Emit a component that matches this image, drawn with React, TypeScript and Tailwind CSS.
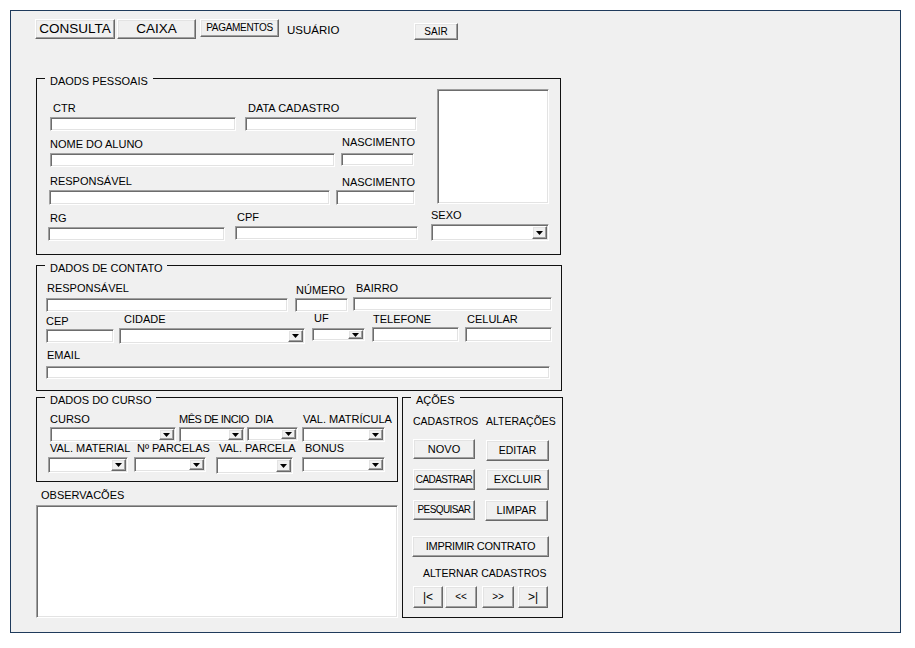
import type { ReactNode } from "react";

// classic win32-ish chrome: sunken edit boxes, raised buttons, black group frames
const sunken =
  "bg-white border border-t-[#a0a0a0] border-l-[#a0a0a0] border-b-white border-r-white shadow-[inset_1px_1px_0_#6d6d6d,inset_-1px_-1px_0_#e3e3e3]";
const raised =
  "bg-[#f0f0f0] border border-t-white border-l-white border-b-[#696969] border-r-[#696969] shadow-[inset_-1px_-1px_0_#a0a0a0,inset_1px_1px_0_#e3e3e3]";

function Box({ className = "" }: { className?: string }) {
  return <div className={`${sunken} ${className}`} />;
}

function Combo({ className = "" }: { className?: string }) {
  return (
    <div className={`${sunken} flex p-[1px] ${className}`}>
      <div className="flex-1" />
      <div className={`${raised} flex w-[15px] items-center justify-center`}>
        <svg width="7" height="4" viewBox="0 0 7 4">
          <path d="M0 0h7L3.5 4z" fill="#000" />
        </svg>
      </div>
    </div>
  );
}

function Btn({ children, className = "" }: { children: ReactNode; className?: string }) {
  return (
    <button
      type="button"
      className={`${raised} flex items-center justify-center whitespace-nowrap leading-none text-black ${className}`}
    >
      {children}
    </button>
  );
}

function Field({
  label,
  className = "",
  labelClass = "",
  boxClass = "",
  combo = false,
}: {
  label: string;
  className?: string;
  labelClass?: string;
  boxClass?: string;
  combo?: boolean;
}) {
  return (
    <div className={`flex shrink-0 flex-col ${className}`}>
      <div className={`h-[13px] whitespace-nowrap text-[11px] leading-[13px] ${labelClass}`}>{label}</div>
      {combo ? <Combo className={boxClass} /> : <Box className={boxClass} />}
    </div>
  );
}

function Group({ title, className = "", children }: { title: string; className?: string; children: ReactNode }) {
  return (
    <fieldset className={`min-w-0 shrink-0 border border-[#111] ${className}`}>
      <legend className="ml-[8px] px-[5px] pt-[6px] text-[11px] leading-[12px]">{title}</legend>
      {children}
    </fieldset>
  );
}

export default function App() {
  return (
    <div className="h-[648px] w-[915px] bg-white p-[10px] font-['Liberation_Sans',Arial,sans-serif] text-black">
      <div className="h-[623px] w-[891px] border border-[#1f3b5c] bg-[#f0f0f0]">
        {/* top menu */}
        <div className="flex items-start pl-[24px] pt-[8px]">
          <Btn className="h-[20px] w-[80px] text-[13.5px]">CONSULTA</Btn>
          <Btn className="ml-[2px] h-[20px] w-[79px] text-[13.5px]">CAIXA</Btn>
          <Btn className="ml-[4px] h-[18px] w-[79px] text-[10px] tracking-[-0.3px]">PAGAMENTOS</Btn>
          <div className="ml-[8px] mt-[4px] w-[127px] text-[11.5px] leading-[14px]">USUÁRIO</div>
          <Btn className="mt-[4px] h-[17px] w-[44px] text-[10px]">SAIR</Btn>
        </div>

        <div className="pl-[25px]">
          <Group title="DAODS PESSOAIS" className="mt-[29px] h-[186px] w-[525px]">
            <div className="flex items-start">
              <div className="w-[380px] shrink-0">
                <div className="mt-[15px] flex items-start">
                  <Field label="CTR" className="ml-[13px] w-[186px]" labelClass="pl-[3px]" boxClass="mt-[2px] h-[14px]" />
                  <Field label="DATA CADASTRO" className="ml-[9px] w-[172px]" labelClass="pl-[3px]" boxClass="mt-[2px] h-[14px]" />
                </div>
                <div className="mt-[5px] flex items-start">
                  <Field label="NOME DO ALUNO" className="ml-[13px] mt-[2px] w-[285px]" boxClass="mt-[2px] h-[14px]" />
                  <Field label="NASCIMENTO" className="ml-[6px] w-[73px]" labelClass="pl-[1px]" boxClass="mt-[4px] h-[13px]" />
                </div>
                <div className="mt-[8px] flex items-start">
                  <Field label="RESPONSÁVEL" className="ml-[12px] w-[281px]" labelClass="pl-[1px]" boxClass="mt-[2px] h-[15px]" />
                  <Field label="NASCIMENTO" className="ml-[6px] mt-[1px] w-[79px]" labelClass="pl-[6px]" boxClass="mt-[1px] h-[15px]" />
                </div>
              </div>
              <Box className="ml-[20px] mt-[2px] h-[115px] w-[112px] shrink-0" />
            </div>
            <div className="mt-[4px] flex items-start">
              <Field label="RG" className="ml-[11px] mt-[3px] w-[177px]" labelClass="pl-[2px]" boxClass="mt-[2px] h-[14px]" />
              <Field label="CPF" className="ml-[10px] mt-[2px] w-[183px]" labelClass="pl-[2px]" boxClass="mt-[2px] h-[14px]" />
              <Field label="SEXO" combo className="ml-[13px] w-[118px]" boxClass="mt-[2px] h-[17px]" />
            </div>
          </Group>

          <Group title="DADOS DE CONTATO" className="mt-[1px] h-[135px] w-[526px]">
            <div className="mt-[8px] flex items-start">
              <Field label="RESPONSÁVEL" className="ml-[9px] w-[242px]" labelClass="pl-[1px]" boxClass="mt-[3px] h-[14px]" />
              <Field label="NÚMERO" className="ml-[7px] mt-[2px] w-[53px]" labelClass="pl-[1px]" boxClass="mt-[1px] h-[14px]" />
              <Field label="BAIRRO" className="ml-[5px] w-[199px]" labelClass="pl-[3px]" boxClass="mt-[2px] h-[14px]" />
            </div>
            <div className="flex items-start">
              <Field label="CEP" className="ml-[9px] mt-[3px] w-[68px]" boxClass="mt-[1px] h-[14px]" />
              <Field label="CIDADE" combo className="ml-[5px] mt-[1px] w-[186px]" labelClass="pl-[5px]" boxClass="mt-[2px] h-[16px]" />
              <Field label="UF" combo className="ml-[7px] w-[53px]" labelClass="pl-[2px]" boxClass="mt-[3px] h-[13px]" />
              <Field label="TELEFONE" className="ml-[7px] mt-[1px] w-[87px]" labelClass="pl-[1px]" boxClass="mt-[1px] h-[15px]" />
              <Field label="CELULAR" className="ml-[6px] mt-[1px] w-[87px]" labelClass="pl-[2px]" boxClass="mt-[1px] h-[15px]" />
            </div>
            <div className="mt-[5px] flex items-start">
              <Field label="EMAIL" className="ml-[9px] w-[504px]" labelClass="pl-[1px]" boxClass="mt-[4px] h-[13px]" />
            </div>
          </Group>

          <div className="mt-[-3px] flex items-start">
            <div className="w-[362px] shrink-0">
              <Group title="DADOS DO CURSO" className="h-[94px] w-[362px]">
                <div className="mt-[7px] flex items-start">
                  <Field label="CURSO" combo className="ml-[13px] w-[126px]" boxClass="mt-[1px] h-[15px]" />
                  <Field label="MÊS DE INCIO" combo className="ml-[3px] w-[66px]" labelClass="tracking-[-0.5px]" boxClass="mt-[1px] h-[15px]" />
                  <Field label="DIA" combo className="ml-[2px] w-[51px]" labelClass="pl-[8px]" boxClass="mt-[1px] h-[14px]" />
                  <Field label="VAL. MATRÍCULA" combo className="ml-[4px] w-[83px]" labelClass="pl-[1px]" boxClass="mt-[1px] h-[15px]" />
                </div>
                <div className="flex items-start">
                  <Field label="VAL. MATERIAL" combo className="ml-[11px] w-[80px]" labelClass="pl-[2px]" boxClass="mt-[2px] h-[16px]" />
                  <Field label="Nº PARCELAS" combo className="ml-[6px] w-[72px]" labelClass="pl-[3px]" boxClass="mt-[2px] h-[15px]" />
                  <Field label="VAL. PARCELA" combo className="ml-[10px] w-[77px]" labelClass="pl-[3px]" boxClass="mt-[2px] h-[17px]" />
                  <Field label="BONUS" combo className="ml-[9px] w-[83px]" labelClass="pl-[3px]" boxClass="mt-[2px] h-[15px]" />
                </div>
              </Group>
              <div className="mt-[7px] h-[13px] pl-[5px] text-[11px] leading-[13px]">OBSERVACÕES</div>
              <Box className="mt-[3px] h-[113px] w-[362px]" />
            </div>

            <Group title="AÇÕES" className="ml-[4px] h-[230px] w-[161px]">
              <div className="mt-[9px] flex items-start text-[10.5px] leading-[13px]">
                <div className="ml-[10px] w-[62px] whitespace-nowrap">CADASTROS</div>
                <div className="ml-[11px] whitespace-nowrap">ALTERAÇÕES</div>
              </div>
              <div className="mt-[11px] flex items-start">
                <Btn className="ml-[10px] h-[20px] w-[62px] text-[11px]">NOVO</Btn>
                <Btn className="ml-[11px] mt-[1px] h-[21px] w-[63px] text-[10.5px]">EDITAR</Btn>
              </div>
              <div className="mt-[8px] flex items-start">
                <Btn className="ml-[10px] h-[21px] w-[62px] text-[10px] tracking-[-0.6px]">CADASTRAR</Btn>
                <Btn className="ml-[11px] h-[21px] w-[63px] text-[11px]">EXCLUIR</Btn>
              </div>
              <div className="mt-[10px] flex items-start">
                <Btn className="ml-[10px] h-[20px] w-[62px] text-[10px] tracking-[-0.6px]">PESQUISAR</Btn>
                <Btn className="ml-[10px] h-[21px] w-[63px] text-[11px]">LIMPAR</Btn>
              </div>
              <Btn className="ml-[9px] mt-[15px] h-[21px] w-[137px] text-[11px] tracking-[-0.3px]">IMPRIMIR CONTRATO</Btn>
              <div className="ml-[20px] mt-[10px] h-[13px] whitespace-nowrap text-[10.5px] leading-[13px]">
                ALTERNAR CADASTROS
              </div>
              <div className="mt-[6px] flex items-start">
                <Btn className="ml-[10px] h-[22px] w-[30px] text-[12px]">|&lt;</Btn>
                <Btn className="ml-[2px] h-[22px] w-[32px] text-[10px]">&lt;&lt;</Btn>
                <Btn className="ml-[5px] h-[22px] w-[32px] text-[10px]">&gt;&gt;</Btn>
                <Btn className="ml-[4px] h-[22px] w-[30px] text-[12px]">&gt;|</Btn>
              </div>
            </Group>
          </div>
        </div>
      </div>
    </div>
  );
}
